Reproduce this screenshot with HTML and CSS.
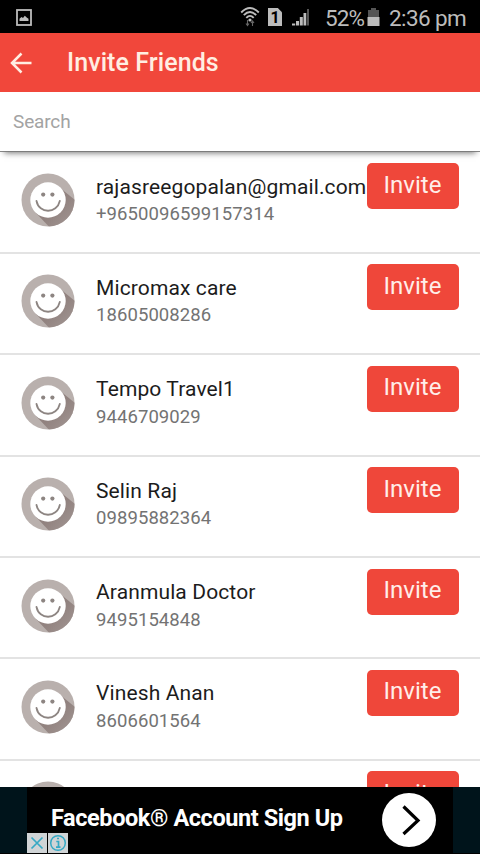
FILE: index.html
```
<!DOCTYPE html>
<html lang="en">
<head>
<meta charset="utf-8">
<title>Invite Friends</title>
<link rel="stylesheet" href="styles.css">
</head>
<body>
<svg width="0" height="0" class="defs" aria-hidden="true">
  <defs>
    <linearGradient id="shade" x1="0" y1="0" x2="1" y2="1"><stop offset=".45" stop-color="#91827f"/><stop offset="1" stop-color="#aaa09d"/></linearGradient>
    <clipPath id="disc"><circle cx="27" cy="27" r="26.5"/></clipPath>
    <symbol id="face" viewBox="0 0 54 54">
      <circle cx="27" cy="27" r="26.5" fill="#b9b0ad"/>
      <path d="M38 14L60 32V60H34L14 39Z" fill="url(#shade)" clip-path="url(#disc)"/>
      <circle cx="27" cy="27" r="17.7" fill="#fff"/>
      <circle cx="22.2" cy="21.6" r="2.1" fill="#8d8582"/><circle cx="31.4" cy="21.6" r="2.1" fill="#8d8582"/>
      <path d="M15.500 28C18 41 36 41 38.800 28" fill="none" stroke="#8d8582" stroke-width="1.800" stroke-linecap="round"/>
    </symbol>
  </defs>
</svg>
<div class="screen">
  <header class="status">
    <svg class="picture" width="16" height="17" viewBox="0 0 16 17"><rect x="1" y="1" width="14" height="15" fill="none" stroke="#bcbcbc" stroke-width="1.800"/><path d="M3.500 12V9.800L5.500 8l1.500 1 1.800-2.300L11 8.800l1.500 1V12Z" fill="#bcbcbc"/></svg>
    <svg class="wifi" width="20" height="22" viewBox="0 0 20 22"><g fill="none" stroke="#bcbcbc" stroke-width="1.900"><path d="M1.200 6.500Q10-2.500 18.800 6.500M3.800 9.200Q10 2.800 16.200 9.200M6.300 11.800Q10 8 13.700 11.800"/></g><circle cx="10" cy="14" r="1.600" fill="#bcbcbc"/><path d="M7.500 14v5M6 17.500l1.500 2 1.500-2M12.500 20v-5M11 17l1.500-2 1.500 2" fill="none" stroke="#666" stroke-width="1.100"/></svg>
    <span class="sim">1</span>
    <svg class="signal" width="19" height="18" viewBox="0 0 19 18"><path d="M1 17.500v-2h3.200v2ZM5 17.500V13h3v4.500ZM8.800 17.500V9h3v8.500ZM12.500 17.500V5h2.800v12.500Z" fill="#bcbcbc"/><path d="M16 17.500V1h2v16.500Z" fill="#555"/></svg>
    <span class="percent">52%</span>
    <svg class="battery" width="13" height="18" viewBox="0 0 13 18"><path d="M1 9V2h3V0h5v2h3v7Z" fill="#555"/><path d="M.5 9h12v9H.5Z" fill="#bcbcbc"/></svg>
    <span class="time">2:36 pm</span>
  </header>
  <div class="appbar">
    <svg width="23" height="22" viewBox="0 0 23 22"><path d="M21.500 11H2M11.500 1.500L2 11l9.500 9.500" fill="none" stroke="#ffeee2" stroke-width="2.500"/></svg>
    <h1>Invite Friends</h1>
  </div>
  <div class="search"><span>Search</span></div>
  <main class="list">
    <div class="row"><svg class="avatar"><use href="#face"/></svg><div class="who"><div class="name">rajasreegopalan@gmail.com</div><div class="phone">+9650096599157314</div></div><button>Invite</button></div>
    <div class="row"><svg class="avatar"><use href="#face"/></svg><div class="who"><div class="name">Micromax care</div><div class="phone">18605008286</div></div><button>Invite</button></div>
    <div class="row"><svg class="avatar"><use href="#face"/></svg><div class="who"><div class="name">Tempo Travel1</div><div class="phone">9446709029</div></div><button>Invite</button></div>
    <div class="row"><svg class="avatar"><use href="#face"/></svg><div class="who"><div class="name">Selin Raj</div><div class="phone">09895882364</div></div><button>Invite</button></div>
    <div class="row"><svg class="avatar"><use href="#face"/></svg><div class="who"><div class="name">Aranmula Doctor</div><div class="phone">9495154848</div></div><button>Invite</button></div>
    <div class="row"><svg class="avatar"><use href="#face"/></svg><div class="who"><div class="name">Vinesh Anan</div><div class="phone">8606601564</div></div><button>Invite</button></div>
    <div class="row"><svg class="avatar"><use href="#face"/></svg><div class="who"><div class="name">Sandeep</div></div><button>Invite</button></div>
  </main>
  <footer class="ad">
    <div class="banner">
      <span class="adtext">Facebook® Account Sign Up</span>
      <svg class="go" width="54" height="54" viewBox="0 0 54 54"><circle cx="27" cy="27" r="27" fill="#fff"/><path d="M21.500 13.500L36 27.500 21.500 41" fill="none" stroke="#000" stroke-width="3.200"/></svg>
      <div class="choices">
        <svg width="20" height="20" viewBox="0 0 20 20"><rect width="20" height="20" fill="#d0d4d6"/><path d="M4.500 4.500l11 11M15.500 4.500l-11 11" stroke="#36a9c4" stroke-width="1.700"/></svg>
        <svg width="20" height="20" viewBox="0 0 20 20"><rect width="20" height="20" fill="#d0d4d6"/><circle cx="10" cy="10" r="7.300" fill="none" stroke="#36a9c4" stroke-width="1.500"/><path d="M8.300 8.500H10.500V14M8 14.200h4.500M9 5.500h2" fill="none" stroke="#36a9c4" stroke-width="1.700"/></svg>
      </div>
    </div>
  </footer>
</div>
</body>
</html>
```
FILE: styles.css
```
* { box-sizing: border-box; }
body { margin: 0; background: #fff; font-family: Roboto, "Liberation Sans", sans-serif; }
.defs { position: absolute; }
.screen { width: 480px; height: 854px; overflow: hidden; display: flex; flex-direction: column; }
svg { display: block; flex: none; }
.status { height: 33px; flex: none; background: #000; color: #bcbcbc; display: flex; align-items: center; padding: 1px 0 0 16px; font-size: 22.5px; white-space: nowrap; }
.wifi { margin: -1px 0 0 208px; }
.sim { width: 14px; height: 18px; margin-left: 8px; background: #bcbcbc; color: #000; font-size: 16px; font-weight: 700; line-height: 19px; text-align: center; clip-path: polygon(0 0, 70% 0, 100% 24%, 100% 100%, 0 100%); }
.signal { margin: -1px 0 0 9px; }
.percent { margin: 1px 0 0 15px; width: 41px; letter-spacing: -.9px; }
.battery { margin: -1px 0 0 1px; }
.time { margin: 1px 0 0 9px; letter-spacing: -.6px; }
.appbar { height: 59px; flex: none; background: #f1473b; display: flex; align-items: center; padding-left: 10px; gap: 34px; color: #ffeee2; }
.appbar h1 { margin: 0; font-size: 25px; font-weight: 500; line-height: 30px; white-space: nowrap; letter-spacing: .08px; }
.search { height: 59px; flex: none; display: flex; align-items: center; padding-left: 13px; color: #a3a3a3; font-size: 19px; letter-spacing: -.15px; background: #fff; box-shadow: 0 6px 6px -4px #777, 0 1px 0 #888; position: relative; }
.list { height: 636px; flex: none; overflow: hidden; padding-top: 1.5px; }
.row { height: 101.4px; display: flex; padding-left: 21px; border-bottom: 2px solid #e3e3e3; }
.row .avatar { width: 54px; height: 54px; margin-top: 20.5px; }
.who { width: 270px; margin: 22px 0 0 21px; white-space: nowrap; }
.name { font-size: 21px; line-height: 25px; color: #1c1c1c; letter-spacing: .12px; }
.phone { font-size: 18.5px; line-height: 24px; margin-top: 2.500px; color: #737373; letter-spacing: .08px; }
button { width: 92px; height: 46px; flex: none; margin: 10.5px 0 0 .5px; border: 0; border-radius: 5px; padding: 0 0 3px; background: #ef473a; color: #ffeee9; font: 24px Roboto, sans-serif; }
.ad { height: 67px; flex: none; background: #00141b; padding: 0 27px; border-bottom: 1px solid #000; }
.banner { position: relative; height: 66px; background: #000; display: flex; align-items: center; padding-left: 24px; }
.adtext { width: 331px; margin-top: -4px; color: #fff; font-size: 23.5px; font-weight: 700; letter-spacing: -.42px; white-space: nowrap; }
.choices { position: absolute; left: 0; bottom: 0; display: flex; gap: 1px; }
```
